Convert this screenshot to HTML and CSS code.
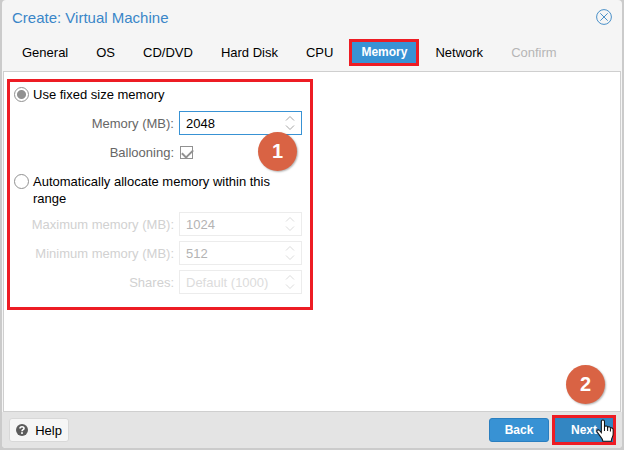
FILE: index.html
```html
<!DOCTYPE html>
<html lang="en">
<head>
  <meta charset="UTF-8">
  <meta name="viewport" content="width=device-width, initial-scale=1.0">
  <title>Create: Virtual Machine</title>
  <link rel="stylesheet" href="styles.css">
</head>
<body>
  <div class="window">
    <!-- Title bar -->
    <div class="header">
      <h1>Create: Virtual Machine</h1>
      <button class="close" type="button" aria-label="Close">
        <svg width="16" height="16" viewBox="0 0 16 16" fill="none" stroke="#4a90c8">
          <circle cx="8" cy="8" r="7.4"/>
          <path d="M4.3 4.3L11.7 11.7M11.7 4.3L4.3 11.7"/>
        </svg>
      </button>
    </div>

    <!-- Wizard steps -->
    <div class="tabs">
      <button class="tab" type="button">General</button>
      <button class="tab" type="button">OS</button>
      <button class="tab" type="button">CD/DVD</button>
      <button class="tab" type="button">Hard Disk</button>
      <button class="tab" type="button">CPU</button>
      <button class="tab active marked" type="button">Memory</button>
      <button class="tab" type="button">Network</button>
      <button class="tab" type="button" disabled>Confirm</button>
    </div>

    <!-- Memory settings -->
    <div class="panel">
      <form class="memory-form" id="memory-form">
        <div class="choice">
          <input type="radio" name="mode" id="fixed" checked>
          <label for="fixed">Use fixed size memory</label>
        </div>
        <div class="form-row">
          <label for="memory">Memory (MB):</label>
          <div class="spinner focused">
            <input type="text" id="memory" value="2048">
            <svg class="arrows" width="10" height="16" viewBox="0 0 10 16"><path d="M1 5.5L5 1.5L9 5.5M1 10.5L5 14.5L9 10.5"/></svg>
          </div>
        </div>
        <div class="form-row">
          <label for="ballooning">Ballooning:</label>
          <input type="checkbox" id="ballooning" checked>
        </div>
        <div class="choice">
          <input type="radio" name="mode" id="auto">
          <label for="auto">Automatically allocate memory within this range</label>
        </div>
        <div class="form-row disabled">
          <label for="max-memory">Maximum memory (MB):</label>
          <div class="spinner">
            <input type="text" id="max-memory" value="1024" disabled>
            <svg class="arrows" width="10" height="16" viewBox="0 0 10 16"><path d="M1 5.5L5 1.5L9 5.5M1 10.5L5 14.5L9 10.5"/></svg>
          </div>
        </div>
        <div class="form-row disabled">
          <label for="min-memory">Minimum memory (MB):</label>
          <div class="spinner">
            <input type="text" id="min-memory" value="512" disabled>
            <svg class="arrows" width="10" height="16" viewBox="0 0 10 16"><path d="M1 5.5L5 1.5L9 5.5M1 10.5L5 14.5L9 10.5"/></svg>
          </div>
        </div>
        <div class="form-row disabled">
          <label for="shares">Shares:</label>
          <div class="spinner">
            <input type="text" id="shares" placeholder="Default (1000)" disabled>
            <svg class="arrows" width="10" height="16" viewBox="0 0 10 16"><path d="M1 5.5L5 1.5L9 5.5M1 10.5L5 14.5L9 10.5"/></svg>
          </div>
        </div>
        <span class="badge badge-one">1</span>
      </form>
    </div>

    <!-- Footer buttons -->
    <div class="footer">
      <button class="button help" type="button">
        <svg width="12" height="12" viewBox="0 0 12 12">
          <circle cx="6" cy="6" r="6" fill="#5c5c5c"/>
          <path d="M4 4.6C4 2.2 8 2.2 8 4.4C8 5.8 6 5.6 6 7.2" fill="none" stroke="#fff" stroke-width="1.6"/>
          <rect x="5.1" y="8.2" width="1.8" height="1.7" fill="#fff"/>
        </svg>
        Help
      </button>
      <div class="actions">
        <button class="button primary" type="button">Back</button>
        <button class="button primary next marked" type="button">Next</button>
        <span class="badge badge-two">2</span>
        <svg class="pointer" width="18" height="23" viewBox="0 0 17 22">
          <path d="M5 13V2.5C5 .5 8 .5 8 2.5V7.5C8.5 6.2 11 6.5 11 8C11.6 7 13.6 7.4 13.7 8.8C14.5 8.2 16.3 8.6 16.3 10.2V14.5C16.3 17 14.5 18 14.5 21.3H6.5C6.3 18.5 3.7 16.5 2.4 14.4L.8 12C.2 10.6 2.2 9.8 3.2 11Z" fill="#fff" stroke="#111"/>
          <path d="M8 7V11.5M11 8V11.5M13.7 9V12" fill="none" stroke="#111"/>
        </svg>
      </div>
    </div>
  </div>
</body>
</html>
```
FILE: styles.css
```css
* {
  box-sizing: border-box;
}
body {
  margin: 0;
  padding: 0 2px 2px;
  min-height: 100vh;
  display: flex;
  background-color: #cbcbcb;
  font-family: "Liberation Sans", Arial, sans-serif;
  font-size: 13px;
  line-height: 17px;
  color: #000;
}
button,
input {
  font: inherit;
  color: inherit;
  margin: 0;
}
.window {
  flex: 1;
  display: flex;
  flex-direction: column;
  background-color: #f5f5f5;
  border-radius: 4px;
  overflow: hidden;
}
.header {
  display: flex;
  align-items: center;
  justify-content: space-between;
  height: 34px;
  padding: 0 10px;
}
.header h1 {
  margin: 0;
  font-size: 15px;
  font-weight: normal;
  color: #3a86c8;
}
.close {
  display: flex;
  padding: 0;
  border: none;
  background: none;
}
.tabs {
  display: flex;
  gap: 4px;
  padding: 5px 8px;
}
.tab {
  height: 27px;
  padding: 0 12px;
  border: none;
  background: none;
}
.tab:disabled {
  color: #b5b5b5;
}
.tab.active {
  padding: 0 9px;
  background-color: #3892d4;
  color: #fff;
  font-size: 12px;
  font-weight: bold;
}
.tab.marked {
  border: 3px solid #ed1c24;
}
.panel {
  flex: 1;
  margin: 0 1px;
  padding: 7px 3px;
  background-color: #fff;
  border: 1px solid #cfcfcf;
}
.memory-form {
  position: relative;
  display: flex;
  flex-direction: column;
  gap: 5px;
  max-width: 306px;
  padding: 0 8px 13px 4px;
  border: 3px solid #ed1c24;
}
.choice {
  display: flex;
  gap: 4px;
  padding-top: 4px;
}
.choice:first-child {
  padding-bottom: 3px;
}
.choice input {
  appearance: none;
  flex: none;
  width: 15px;
  height: 15px;
  margin-top: 1px;
  border: 1px solid #919191;
  border-radius: 50%;
  background-color: #fff;
}
.choice input:checked {
  background: radial-gradient(circle, #919191 4px, #fff 5px);
}
.form-row {
  display: flex;
  align-items: center;
  gap: 5px;
  height: 24px;
}
.form-row label {
  flex: 0 0 160px;
  text-align: right;
  color: #666;
}
.form-row input[type="checkbox"] {
  appearance: none;
  position: relative;
  width: 13px;
  height: 13px;
  margin-left: 1px;
  border: 1px solid #919191;
  background-color: #fff;
}
.form-row input[type="checkbox"]:checked::after {
  content: "";
  position: absolute;
  left: 1px;
  top: 2px;
  width: 9px;
  height: 5px;
  border: solid #919191;
  border-width: 0 0 2px 2px;
  transform: rotate(-45deg);
}
.spinner {
  flex: 1;
  min-width: 0;
  display: flex;
  align-items: center;
  height: 24px;
  padding: 0 6px;
  border: 1px solid #cfcfcf;
  background-color: #fff;
}
.spinner.focused {
  border-color: #3892d4;
}
.spinner input {
  flex: 1;
  min-width: 0;
  padding: 0;
  border: none;
  outline: none;
  background: none;
}
.arrows {
  flex: none;
  fill: none;
  stroke: #a5a5a5;
}
.disabled label {
  color: #d1d1d1;
}
.disabled .spinner {
  border-color: #ececec;
}
.disabled input {
  color: #b3b3b3;
}
.disabled input::placeholder {
  color: #dcdcdc;
}
.disabled .arrows {
  stroke: #dcdcdc;
}
.footer {
  display: flex;
  align-items: center;
  justify-content: space-between;
  padding: 6px 9px 6px 7px;
  background-color: #e4e4e4;
}
.button {
  display: flex;
  align-items: center;
  justify-content: center;
  height: 24px;
  border: 1px solid #d8d8d8;
  border-radius: 3px;
}
.help {
  gap: 7px;
  width: 60px;
  padding: 0 4px;
  background-color: #f6f6f6;
}
.actions {
  position: relative;
  display: flex;
  gap: 6px;
}
.primary {
  width: 60px;
  padding: 0;
  border-color: #2a7fc0;
  background-color: #3892d4;
  color: #fff;
  font-size: 12px;
  font-weight: bold;
}
.next {
  width: 58px;
  border-color: #3083c0;
  background-color: #3386c2;
}
.next.marked {
  outline: 3px solid #ed1c24;
  border-radius: 0;
}
/* Step markers */
.badge {
  position: absolute;
  width: 39px;
  height: 39px;
  border-radius: 50%;
  background-color: #d96344;
  box-shadow: 1px 1px 2px rgba(0, 0, 0, 0.3);
  color: #fff;
  font-size: 20px;
  font-weight: bold;
  line-height: 38px;
  text-align: center;
}
.badge-one {
  top: 50px;
  right: 13px;
}
.badge-two {
  top: -53px;
  right: 8px;
}
.pointer {
  position: absolute;
  top: 1px;
  right: -1px;
}
```
